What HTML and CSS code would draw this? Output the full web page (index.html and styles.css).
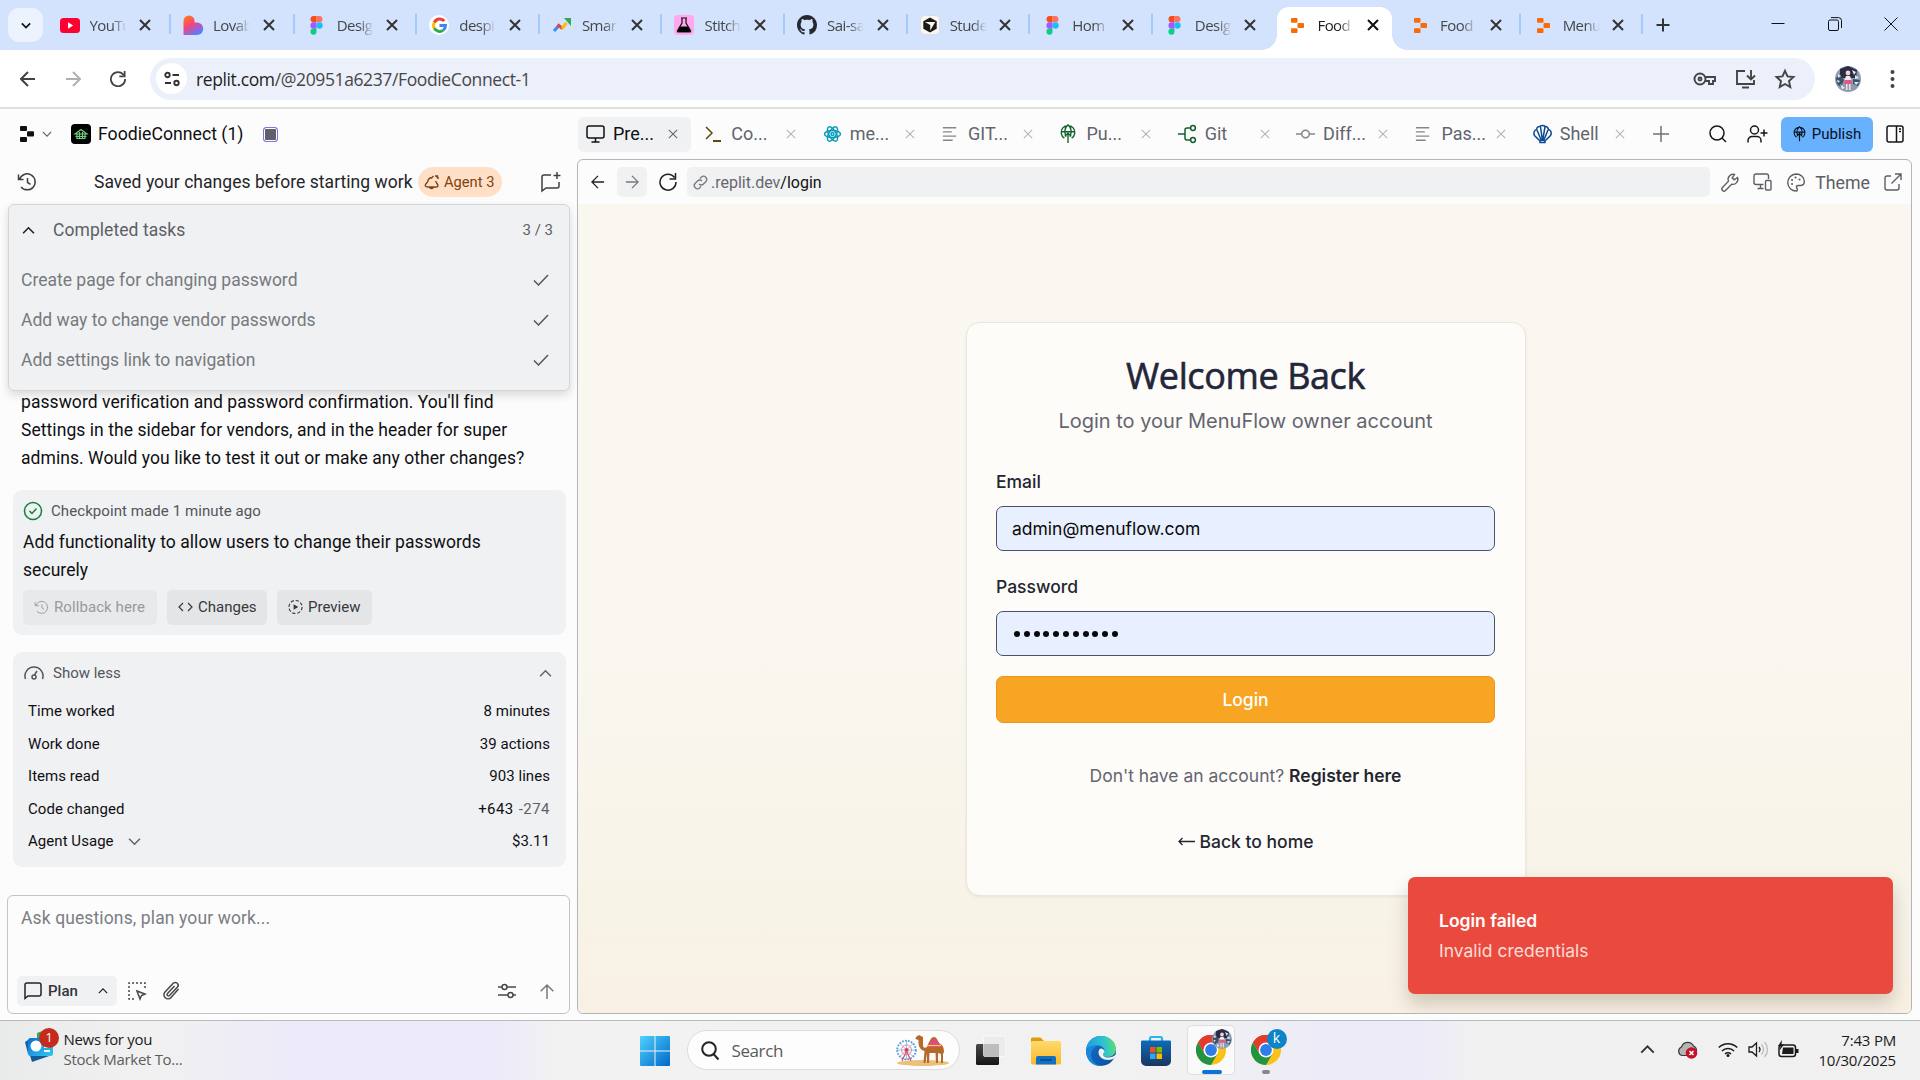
FILE: index.html
```html
<!DOCTYPE html>
<html lang="en">
<head>
<meta charset="utf-8">
<title>FoodieConnect (1)</title>
<link rel="stylesheet" href="styles.css">
</head>
<body>
<svg class="defs" aria-hidden="true">
  <defs>
    <linearGradient id="lov" x1="0" y1="0" x2=".6" y2="1"><stop offset=".1" stop-color="#ff7a18"/><stop offset=".5" stop-color="#f6437f"/><stop offset="1" stop-color="#5b7cff"/></linearGradient>
    <linearGradient id="win" x1="0" y1="0" x2="1" y2="1"><stop offset="0" stop-color="#4fd2ff"/><stop offset="1" stop-color="#0067c8"/></linearGradient>
    <linearGradient id="edgeA" x1="0" y1=".3" x2="1" y2=".2"><stop offset="0" stop-color="#1f9be0"/><stop offset=".6" stop-color="#2fc4cf"/><stop offset="1" stop-color="#5fe06c"/></linearGradient>
    <linearGradient id="edgeB" x1="0" y1="0" x2="1" y2="1"><stop offset="0" stop-color="#1573c9"/><stop offset="1" stop-color="#0a4f9f"/></linearGradient>
    <linearGradient id="store" x1="0" y1="0" x2="0" y2="1"><stop offset="0" stop-color="#0c6cb8"/><stop offset="1" stop-color="#1c3560"/></linearGradient>
    <linearGradient id="fold" x1="0" y1="0" x2="0" y2="1"><stop offset="0" stop-color="#ffd96a"/><stop offset="1" stop-color="#fbb92a"/></linearGradient>
    <linearGradient id="news" x1="0" y1="0" x2="1" y2="1"><stop offset="0" stop-color="#0a6fd6"/><stop offset="1" stop-color="#33c9ee"/></linearGradient>
    <linearGradient id="dark" x1="0" y1="0" x2="0" y2="1"><stop offset="0" stop-color="#4a4a4a"/><stop offset="1" stop-color="#151515"/></linearGradient>
  </defs>
  <symbol id="x" viewBox="0 0 12 12"><path d="M1 1l10 10M11 1L1 11"/></symbol>
  <symbol id="down" viewBox="0 0 12 12"><path d="M1 3.5l5 5 5-5"/></symbol>
  <symbol id="up" viewBox="0 0 12 12"><path d="M1 8.5l5-5 5 5"/></symbol>
  <symbol id="left" viewBox="0 0 16 16"><path d="M15 8H1.5M8 1L1 8l7 7"/></symbol>
  <symbol id="right" viewBox="0 0 16 16"><path d="M1 8h13.5M8 1l7 7-7 7"/></symbol>
  <symbol id="figma" viewBox="0 0 13 20"><path fill="#f24e1e" d="M3.5 0h3v6.600h-3a3.300 3.300 0 010-6.600z"/><path fill="#ff7262" d="M6.500 0h3a3.300 3.300 0 010 6.600h-3z"/><path fill="#a259ff" d="M3.500 6.600h3v6.700h-3a3.300 3.300 0 010-6.700z"/><circle fill="#1abcfe" cx="9.700" cy="10" r="3.300"/><path fill="#0acf83" d="M3.500 13.300h3v3.300a3.200 3.200 0 11-3-3.300z"/></symbol>
  <symbol id="replit" viewBox="0 0 14 16"><rect width="7" height="5" rx="1"/><rect x="7" y="5.300" width="7" height="5.300" rx="1"/><rect y="11" width="7" height="5" rx="1"/></symbol>
  <symbol id="reload" viewBox="0 0 18 18"><path d="M15.500 4.500A8 8 0 1017 9M16.500 0v6h-6"/></symbol>
  <symbol id="lines" viewBox="0 0 18 18"><path d="M1 2h15M1 6.700h10M1 11.300h15M1 16h11"/></symbol>
  <symbol id="globe" viewBox="0 0 18 22"><path d="M5 15.500a7.500 7.500 0 118 0M1.500 8.500h15M6.800 14C4.500 9 5.500 3.500 9 1c3.500 2.500 4.500 8 2.200 13M9 21V10M5.500 13.500L9 10l3.500 3.500"/></symbol>
  <symbol id="history" viewBox="0 0 20 20"><path d="M2.500 7.500A8 8 0 114 15M1.500 2.500v5h5M10.500 6v4.500l3 1.800"/></symbol>
  <symbol id="check" viewBox="0 0 16 12"><path d="M1 6.500L5.500 11 15 1"/></symbol>
  <symbol id="chrome" viewBox="0 0 30 30"><circle cx="15" cy="15" r="15" fill="#fbc116"/><path fill="#e33b2e" d="M15 15L2 7.500A15 15 0 0128 7.500H15z"/><path fill="#e33b2e" d="M2 7.500A15 15 0 0128 7.500L15 8l-6.500 10.800z"/><path fill="#229342" d="M2 7.500A15 15 0 0015 30l6.500-11.300-6.500 3-6.500-3z"/><circle cx="15" cy="15" r="7.500" fill="#fff"/><circle cx="15" cy="15" r="5.900" fill="#2f7de9"/></symbol>
  <symbol id="face" viewBox="0 0 26 26"><circle cx="13" cy="13" r="13" fill="#8e9cb0"/><path fill="#2c2b46" d="M5 3l8-3 9 4-1 8H5z"/><path fill="#3c5068" d="M1 12l4-4 4 6-3 7-4-3zM18 13l7 1-2 6-5-2z"/><path fill="#dfe9f2" d="M2 14l3 1-2 2zM19 16l5 0-3 3zM5 18l5 4-3 1zM17 4l4 2-2 3zM3 8l3 2-3 2zM20 9l4 3-4 1z"/><circle cx="13" cy="7" r="2.400" fill="#f2d3c8"/><path fill="#f3e6ee" d="M11 10h4l1.500 4h-7z"/><path fill="#e2578a" d="M10 14h6l1 4H9z"/><path fill="#f4ddd4" d="M11 18h1.500v6H11zM14 18h1.500v6H14z"/></symbol>
</svg>

<header class="tabstrip">
  <button class="tabsearch"><svg class="i12 s2"><use href="#down"/></svg></button>
  <div class="tab wide"><span class="fav"><svg width="20" height="15" viewBox="0 0 20 15"><rect width="20" height="15" rx="3.500" fill="#f03"/><path fill="#fff" d="M8 4.300l5.200 3.200L8 10.700z"/></svg></span><span class="title">YouTu</span><svg class="i11 s2 c"><use href="#x"/></svg></div>
  <div class="tab wide"><span class="fav"><svg width="20" height="20" viewBox="0 0 20 20"><path fill="url(#lov)" d="M.5 6a5.500 5.500 0 0111 0v1.500h2.500a6 6 0 010 12.500H.5z"/></svg></span><span class="title">Lovab</span><svg class="i11 s2 c"><use href="#x"/></svg></div>
  <div class="tab"><span class="fav"><svg width="13" height="19"><use href="#figma"/></svg></span><span class="title">Desig</span><svg class="i11 s2 c"><use href="#x"/></svg></div>
  <div class="tab"><span class="fav round"><svg width="15" height="15" viewBox="0 0 15 15" fill="none" stroke-width="3"><path stroke="#ea4335" d="M12.300 3A6 6 0 002.300 4.700"/><path stroke="#fbbc05" d="M2.300 4.700a6 6 0 000 5.700"/><path stroke="#34a853" d="M2.300 10.300a6 6 0 009 1.800"/><path stroke="#4285f4" d="M11.300 12.100a6 6 0 002.200-4.600H7.500"/></svg></span><span class="title">despi</span><svg class="i11 s2 c"><use href="#x"/></svg></div>
  <div class="tab"><span class="fav"><svg width="18" height="14" viewBox="0 0 18 14" fill="none" stroke-width="3"><path stroke="#4285f4" d="M1 13l4.500-5"/><path stroke="#ea4335" d="M4.500 6.500l5 4"/><path stroke="#fbbc05" d="M9 10.500l4.500-5.500"/><path fill="#34a853" d="M11 0h7v8z"/></svg></span><span class="title">Smar</span><svg class="i11 s2 c"><use href="#x"/></svg></div>
  <div class="tab"><span class="fav"><svg width="20" height="20" viewBox="0 0 20 20"><rect width="20" height="20" rx="4" fill="#ffa8ef"/><path d="M7 3h6M8 3v5l-4.500 7.500a1 1 0 001 1.500h11a1 1 0 001-1.500L12 8V3" fill="none" stroke="#111" stroke-width="1.200"/><path fill="#000" d="M6.200 11.500h7.600l2.700 4.500-1 1h-11l-1-1z"/></svg></span><span class="title">Stitch</span><svg class="i11 s2 c"><use href="#x"/></svg></div>
  <div class="tab"><span class="fav"><svg width="20" height="20" viewBox="0 0 16 16"><path fill="#24292f" d="M8 0C3.580 0 0 3.580 0 8c0 3.540 2.290 6.530 5.470 7.590.4.070.55-.17.55-.38 0-.19-.01-.82-.01-1.490-2.010.37-2.530-.49-2.690-.94-.09-.23-.48-.94-.82-1.130-.28-.15-.68-.52-.01-.53.63-.01 1.080.58 1.230.82.72 1.210 1.870.87 2.330.66.07-.52.28-.87.51-1.070-1.780-.2-3.640-.89-3.640-3.950 0-.87.31-1.590.82-2.150-.08-.2-.36-1.020.08-2.120 0 0 .67-.21 2.200.82.64-.18 1.320-.27 2-.27s1.360.09 2 .27c1.530-1.040 2.200-.82 2.200-.82.44 1.100.16 1.920.08 2.120.51.56.82 1.270.82 2.150 0 3.070-1.870 3.750-3.650 3.950.29.25.54.73.54 1.480 0 1.070-.01 1.930-.01 2.200 0 .21.15.46.55.38A8.010 8.010 0 0016 8c0-4.420-3.580-8-8-8z"/></svg></span><span class="title">Sai-sa</span><svg class="i11 s2 c"><use href="#x"/></svg></div>
  <div class="tab"><span class="fav"><svg width="20" height="20" viewBox="0 0 20 20"><rect x=".5" y=".5" width="19" height="19" rx="4" fill="#f8f7f3" stroke="#ddd"/><path fill="#1c1a14" d="M10 2.500l6.700 3.800v7.500L10 17.500l-6.700-3.700V6.300z"/><path fill="#f8f7f3" d="M5 7h10.300l-5.100 8.600V9.900z"/></svg></span><span class="title">Stude</span><svg class="i11 s2 c"><use href="#x"/></svg></div>
  <div class="tab"><span class="fav"><svg width="13" height="19"><use href="#figma"/></svg></span><span class="title">Hom</span><svg class="i11 s2 c"><use href="#x"/></svg></div>
  <div class="tab last"><span class="fav"><svg width="13" height="19"><use href="#figma"/></svg></span><span class="title">Desig</span><svg class="i11 s2 c"><use href="#x"/></svg></div>
  <div class="tab active last"><span class="fav or"><svg width="13" height="15"><use href="#replit"/></svg></span><span class="title">Food</span><svg class="i11 s2 c"><use href="#x"/></svg></div>
  <div class="tab"><span class="fav or"><svg width="13" height="15"><use href="#replit"/></svg></span><span class="title">Food</span><svg class="i11 s2 c"><use href="#x"/></svg></div>
  <div class="tab"><span class="fav or"><svg width="13" height="15"><use href="#replit"/></svg></span><span class="title">Menu</span><svg class="i11 s2 c"><use href="#x"/></svg></div>
  <svg class="newtab" width="14" height="14" viewBox="0 0 14 14"><path d="M7 .5v13M.5 7h13"/></svg>
  <div class="winctl">
    <svg width="14" height="14" viewBox="0 0 14 14"><path d="M.5 6.500h13"/></svg>
    <svg width="14" height="14" viewBox="0 0 14 14"><rect x=".5" y="3" width="10" height="10.500" rx="1.500"/><path d="M3 .6h7.500a3 3 0 013 3V11"/></svg>
    <svg width="14" height="14" viewBox="0 0 14 14"><path d="M.5.5l13 13M13.500.5l-13 13"/></svg>
  </div>
</header>

<nav class="toolbar">
  <svg class="i15 s2 nav"><use href="#left"/></svg>
  <svg class="i15 s2 nav dim"><use href="#right"/></svg>
  <svg class="i15 s2 nav"><use href="#reload"/></svg>
  <div class="omni">
    <span class="site"><svg width="16" height="14" viewBox="0 0 16 14"><circle cx="3.500" cy="3" r="2.200"/><path d="M8.500 3h6.500M1 11h6"/><circle cx="12.500" cy="11" r="2.200"/></svg></span>
    <span class="url">replit.com<span>/@20951a6237/FoodieConnect-1</span></span>
    <svg class="ob" width="23" height="16" viewBox="0 0 23 16"><circle cx="7" cy="8" r="5.500"/><circle cx="7" cy="8" r="1.500"/><path d="M12 6h10v4h-2v3h-4v-3h-4"/></svg>
    <svg class="ob" width="21" height="20" viewBox="0 0 21 20"><path d="M10 2H2v13h17v-4M16 1v9M12 6.500l4 4 4-4M7 18.500h7" /></svg>
    <svg class="ob" width="20" height="20" viewBox="0 0 20 20"><path d="M10 1.800l2.500 5.600 6 .6-4.500 4.100 1.300 6-5.300-3.100-5.300 3.100 1.300-6L1.500 8l6-.6z"/></svg>
  </div>
  <svg class="avatar" width="26" height="26"><use href="#face"/></svg>
  <svg class="dots" width="5" height="20" viewBox="0 0 5 20"><circle cx="2.500" cy="3" r="2"/><circle cx="2.500" cy="10" r="2"/><circle cx="2.500" cy="17" r="2"/></svg>
</nav>

<div class="bar">
  <div class="project">
    <svg class="rlogo" width="14" height="16"><use href="#replit"/></svg>
    <svg class="i9 s1"><use href="#down"/></svg>
    <svg class="appicon" width="20" height="20" viewBox="0 0 20 20"><rect width="20" height="20" rx="4"/><path d="M4 10l6-4.500 6 4.500zM4.500 12.500h11M6 10v4.500h8V10M8.500 8v6M11.500 8v6" fill="none" stroke="#6fcf7c" stroke-width="1.200"/></svg>
    <span class="pname">FoodieConnect (1)</span>
    <span class="swatch"></span>
  </div>
  <div class="panes">
    <div class="pt on"><svg width="20" height="18" viewBox="0 0 20 18"><rect x="1" y="1" width="17" height="12" rx="2"/><path d="M9.500 13v4M5.500 17h8"/></svg><span>Pre...</span><svg class="i10 px"><use href="#x"/></svg></div>
    <div class="pt olive"><svg width="20" height="18" viewBox="0 0 20 18"><path d="M2 2l6 6-6 6"/><path stroke-width="2" d="M9 16h8"/></svg><span>Co...</span><svg class="i10 px"><use href="#x"/></svg></div>
    <div class="pt cyan"><svg width="20" height="18" viewBox="0 0 20 18"><circle cx="9.500" cy="9" r="1.500"/><ellipse cx="9.500" cy="9" rx="8" ry="3.600"/><ellipse cx="9.500" cy="9" rx="8" ry="3.600" transform="rotate(60 9.500 9)"/><ellipse cx="9.500" cy="9" rx="8" ry="3.600" transform="rotate(120 9.500 9)"/></svg><span>me...</span><svg class="i10 px"><use href="#x"/></svg></div>
    <div class="pt gray"><svg width="20" height="18"><use href="#lines" width="18" height="16" y="1"/></svg><span>GIT...</span><svg class="i10 px"><use href="#x"/></svg></div>
    <div class="pt green"><svg width="20" height="20"><use href="#globe" width="18" height="20"/></svg><span>Pu...</span><svg class="i10 px"><use href="#x"/></svg></div>
    <div class="pt green"><svg width="20" height="18" viewBox="0 0 20 18"><path d="M0 9h7M12.500 3H9a2 2 0 00-2 2v8a2 2 0 002 2h3.500"/><circle cx="15" cy="3" r="2.400"/><circle cx="15" cy="15" r="2.400"/></svg><span>Git</span><svg class="i10 px"><use href="#x"/></svg></div>
    <div class="pt gray"><svg width="20" height="18" viewBox="0 0 20 18"><circle cx="9.500" cy="9" r="3.800"/><path d="M0 9h5.700M13.300 9H19"/></svg><span>Diff...</span><svg class="i10 px"><use href="#x"/></svg></div>
    <div class="pt gray"><svg width="20" height="18"><use href="#lines" width="18" height="16" y="1"/></svg><span>Pas...</span><svg class="i10 px"><use href="#x"/></svg></div>
    <div class="pt navy"><svg width="20" height="20" viewBox="0 0 20 20"><path d="M7 17L1.500 11.500C0 9 1.500 6 3.500 5.500 4 3 6 2.200 7 2.500 8 1 11 1 12 2.500c1.500-.3 3 1 3.500 3 2.500.5 3.500 3.500 2 6L12 17v1.500H7zM8.500 17L4 6M9.500 17L7.500 3M9.500 17l2.500-14M10.500 17L15 6"/></svg><span>Shell</span><svg class="i10 px"><use href="#x"/></svg></div>
    <svg class="padd" width="16" height="16" viewBox="0 0 16 16"><path d="M8 0v16M0 8h16"/></svg>
  </div>
  <div class="acts">
    <svg width="18" height="18" viewBox="0 0 18 18"><circle cx="8" cy="8" r="7"/><path d="M13 13l4 4"/></svg>
    <svg width="21" height="18" viewBox="0 0 21 18"><circle cx="7.500" cy="5" r="4"/><path d="M1 17.500v-2a4 4 0 014-4h5a4 4 0 014 4v2M17 4.500v7M13.500 8h7"/></svg>
    <button class="publish"><svg width="13" height="16"><use href="#globe" width="13" height="16"/></svg>Publish</button>
    <svg width="18" height="18" viewBox="0 0 18 18"><rect x="1" y="1" width="16" height="16" rx="2"/><path d="M10.500 1v16M13 4h2M13 6.500h2"/></svg>
  </div>
</div>

<main class="work">
  <section class="agent">
    <div class="ahead">
      <svg class="i20 ink"><use href="#history"/></svg>
      <span class="saved">Saved your changes before starting work</span>
      <span class="pill"><svg width="16" height="16" viewBox="0 0 16 16"><path d="M8 3.500C5 3.500 4 6 3.500 8L1.500 10.500c-1 2 1 2.500 3 2.500h7c3 0 3-1.500 1.500-3.500L11.500 7M5.500 13c.5 2 3.500 2 4 0M7 4.500L9.500 2M12 1v2M15 4h-2M14 1.500L12.500 3.500"/></svg>Agent 3</span>
      <svg class="newchat ink" width="20" height="20" viewBox="0 0 20 20"><path d="M10 3H3a2 2 0 00-2 2v14l4-3h11a2 2 0 002-2v-4M16 0v7M12.500 3.500h7"/></svg>
    </div>
    <div class="tasks">
      <div class="thead"><svg class="i12 s15"><use href="#up"/></svg><span class="tt">Completed tasks</span><span class="cnt">3 / 3</span></div>
      <div class="trow"><span>Create page for changing password</span><svg width="16" height="12"><use href="#check"/></svg></div>
      <div class="trow"><span>Add way to change vendor passwords</span><svg width="16" height="12"><use href="#check"/></svg></div>
      <div class="trow"><span>Add settings link to navigation</span><svg width="16" height="12"><use href="#check"/></svg></div>
    </div>
    <p class="msg">password verification and password confirmation. You'll find<br>Settings in the sidebar for vendors, and in the header for super<br>admins. Would you like to test it out or make any other changes?</p>
    <div class="card check">
      <div class="ck"><svg width="20" height="20" viewBox="0 0 20 20"><circle cx="10" cy="10" r="8.500"/><path d="M6.500 10l2.500 2.500 4.500-5"/></svg>Checkpoint made 1 minute ago</div>
      <p class="ctext">Add functionality to allow users to change their passwords<br>securely</p>
      <div class="btns">
        <button class="off"><svg width="15" height="15"><use href="#history" width="15" height="15"/></svg>Rollback here</button>
        <button><svg width="15" height="14" viewBox="0 0 15 14"><path d="M5 3L1 7l4 4M10 3l4 4-4 4"/></svg>Changes</button>
        <button><svg width="15" height="16" viewBox="0 0 16 16"><circle cx="8" cy="8" r="7" stroke-dasharray="3.500 2"/><path fill="currentColor" stroke="none" d="M6 5v6l5-3z"/></svg>Preview</button>
      </div>
    </div>
    <div class="card stats">
      <div class="sh"><svg width="20" height="14" viewBox="0 0 20 14"><path d="M1.500 13a9 9 0 1117 0M10.500 9L13 5"/><circle cx="10" cy="11" r="2"/></svg><span>Show less</span><svg class="i12 s1"><use href="#up"/></svg></div>
      <div class="sr"><span>Time worked</span><span>8 minutes</span></div>
      <div class="sr"><span>Work done</span><span>39 actions</span></div>
      <div class="sr"><span>Items read</span><span>903 lines</span></div>
      <div class="sr"><span>Code changed</span><span class="diff">+643 <i>-274</i></span></div>
      <div class="sr"><span>Agent Usage<svg class="i12 s1"><use href="#down"/></svg></span><span>$3.11</span></div>
    </div>
    <div class="composer">
      <span class="ph">Ask questions, plan your work...</span>
      <div class="tools">
        <span class="plan"><svg width="18" height="18" viewBox="0 0 18 18"><path d="M1 16.500V3a2 2 0 012-2h12a2 2 0 012 2v9a2 2 0 01-2 2H4z"/></svg><b>Plan</b><svg class="i9 s15"><use href="#up"/></svg></span>
        <svg width="18" height="18" viewBox="0 0 18 18"><path stroke-dasharray="2 2" d="M6 17H1V1h16v6"/><path d="M9 9l8 3-3.500 1.500L12 17z"/></svg>
        <svg class="clip" width="17" height="18" viewBox="0 0 17 18"><path d="M15.500 7L8 15.500a4 4 0 01-6-5.500l8-8.500a2.800 2.800 0 014.500 3.500l-8 8.500a1.300 1.300 0 01-2-2l7-7.500"/></svg>
        <svg class="slid" width="19" height="16" viewBox="0 0 19 16"><path d="M0 4h4M9 4h9M0 12h10M15 12h3"/><circle cx="6.500" cy="4" r="2.500"/><circle cx="12.500" cy="12" r="2.500"/></svg>
        <svg class="send" width="14" height="15" viewBox="0 0 14 15"><path d="M7 15V1M.7 7.300L7 1l6.300 6.300"/></svg>
      </div>
    </div>
  </section>

  <section class="preview">
    <div class="pbar">
      <svg class="i13 s15"><use href="#left"/></svg>
      <span class="fwd"><svg class="i13 s15"><use href="#right"/></svg></span>
      <svg class="prel s15" width="18" height="18"><use href="#reload"/></svg>
      <div class="addr"><svg width="15" height="15" viewBox="0 0 15 15"><path d="M6 9a3 3 0 004.500 0l2.500-2.500a3.200 3.200 0 00-4.500-4.500L7 3.500M9 6a3 3 0 00-4.500 0L2 8.500A3.200 3.200 0 006.500 13L8 11.500"/></svg><span>.replit.dev<b>/login</b></span></div>
      <svg width="18" height="19" viewBox="0 0 18 19"><path d="M16.500 4.500l-3.300 2.300-2-2L13.500 1.500A5 5 0 007.500 8.200L1.500 14.500a2 2 0 003 3l6.200-6.300a5 5 0 005.800-6.700z"/></svg>
      <svg width="19" height="18" viewBox="0 0 19 18"><path d="M15.500 6V3a2 2 0 00-2-2H3a2 2 0 00-2 2v6.500a2 2 0 002 2h7.500M7.500 11.500v4M4.500 15.500h6"/><rect x="12.500" y="7.500" width="5.500" height="9.500" rx="1"/></svg>
      <svg width="18" height="19" viewBox="0 0 18 19"><path d="M9.500 18A8.500 8.500 0 119 1c5 0 8.300 3.500 8.300 7.500 0 2.500-1.800 4-4 4h-2c-2 0-2.300 1.500-1.500 2.500s.8 3-.3 3z"/><path d="M5 7h.1M8.500 4.500h.1M12.500 6.500h.1M5 11h.1" stroke-width="2" stroke-linecap="round"/></svg>
      <span class="theme">Theme</span>
      <svg width="18" height="18" viewBox="0 0 18 18"><path d="M7 3H3a2 2 0 00-2 2v10a2 2 0 002 2h10a2 2 0 002-2v-4M11 1h6v6M17 1L7.500 10.500"/></svg>
    </div>
    <div class="site-page">
      <form class="login">
        <h1>Welcome Back</h1>
        <p class="sub">Login to your MenuFlow owner account</p>
        <label>Email</label>
        <div class="field">admin@menuflow.com</div>
        <label>Password</label>
        <div class="field pw"><i></i><i></i><i></i><i></i><i></i><i></i><i></i><i></i><i></i><i></i><i></i></div>
        <div class="go">Login</div>
        <p class="reg">Don't have an account? <b>Register here</b></p>
        <p class="home"><svg width="17" height="9" viewBox="0 0 17 9"><path d="M17 4.500H1M4.500 1L1 4.500 4.500 8"/></svg>Back to home</p>
      </form>
      <div class="toast"><b>Login failed</b><span>Invalid credentials</span></div>
    </div>
  </section>
</main>

<footer class="taskbar">
  <div class="widget">
    <div class="wicon"><svg width="29" height="32" viewBox="0 0 29 32"><path fill="#3ea45a" d="M12 3l8-3v10h-8z"/><path fill="#145a94" d="M1 13l26 12-20 7z"/><rect x="3" y="8" width="25" height="18" rx="2.500" fill="url(#news)"/><path fill="#0f5fb8" d="M0 12l3-2v14z"/><circle cx="11" cy="16" r="5.500" fill="#fff"/><path stroke="#e8fbff" stroke-width="2" d="M19 17h6M19 21h6"/></svg><em>1</em></div>
    <div class="wtext"><span>News for you</span><span class="w2">Stock Market To...</span></div>
  </div>
  <div class="center">
    <svg class="start" width="30" height="30" viewBox="0 0 30 30"><path fill="url(#win)" d="M0 1a1 1 0 011-1h13.500v14.500H0zM15.500 0H29a1 1 0 011 1v13.500H15.500zM0 15.500h14.500V30H1a1 1 0 01-1-1zM15.500 15.500H30V29a1 1 0 01-1 1H15.500z"/></svg>
    <div class="search"><svg class="mag" width="18" height="19" viewBox="0 0 18 19"><circle cx="8" cy="8" r="6.800"/><path d="M12.500 13l5 5.500"/></svg><span>Search</span>
      <svg width="54" height="32" viewBox="0 0 54 32"><ellipse cx="27" cy="29" rx="26" ry="3" fill="#ecc078"/><g fill="none" stroke="#4b9ae0" stroke-width="1.800" stroke-dasharray="1.700 1.300"><circle cx="10.500" cy="16" r="9.300"/></g><g stroke="#6aa9dd" stroke-width=".7"><path d="M10.500 6v20M.5 16h20M3.500 9l14 14M17.500 9l-14 14"/></g><circle cx="10.500" cy="16" r="5" fill="none" stroke="#f08a9a" stroke-width="1"/><circle cx="10.500" cy="16" r="2" fill="#e8384f"/><path d="M10.500 17l-4.500 10M10.500 17l4.500 10" stroke="#e0506a" stroke-width="1.200"/><path fill="#b56a2c" d="M20 3l3-2 4 2v7c0 4 1.500 4.500 4 3 2-5 4-10 7-10s4 5 6 7c3 1 4 4 4 8l-1 2v9h-2V20l-3-1 0 10h-2l-.5-10-6 0-.5 10h-2l0-10-1.500 10h-2l1-12c-4-1-6-4-6-9V6l-3-1z"/><path fill="#e14a7a" d="M33 9l5-5 6 6 1 3H32z"/><path stroke="#ffd24d" stroke-width="1.200" d="M32 11.500h13"/></svg></div>
    <svg class="tv" width="30" height="30" viewBox="0 0 30 30"><rect y="8" width="23" height="21" rx="1.500" fill="url(#dark)"/><rect x="7.500" y="0" width="22" height="20.500" rx="1.500" fill="#e9e9e9" fill-opacity=".82" stroke="#fff" stroke-opacity=".6"/><path fill="#bdbdbd" d="M8 8h15v12.500H8z"/></svg>
    <svg class="fo" width="30" height="28" viewBox="0 0 30 28"><path fill="#dd9a0a" d="M0 2a1.500 1.500 0 011.500-1.500h8L13 4v6H0z"/><rect y="4" width="30" height="23.500" rx="1.500" fill="url(#fold)"/><path fill="#1070c4" d="M5 27.500V21a2 2 0 012-2h16a2 2 0 012 2v6.500z"/><path stroke="#0a4c8c" stroke-width="1.800" d="M9 23h12"/></svg>
    <svg class="ed" width="30" height="30" viewBox="0 0 30 30"><circle cx="15" cy="15" r="15" fill="url(#edgeB)"/><path fill="url(#edgeA)" d="M0 14C1 5 7 0 15 0c9 0 15 6 15 13 0 5-4 8-8 8-3 0-5-1-5-2.500s1.500-1.500 1.500-4-3-5-7-5C7 9.500 1.500 11 0 14z"/><path fill="#1a86dc" d="M0 14c2-4 7-5 11-4-4 2-6 5-6 9s3 9 9 11C5 30 0 23 0 14z"/><path fill="#f1f1f1" d="M30 21c-2 2-5 3-8 3-5 0-9.500-3-9.500-7.500 0-2 1-3.500 2-4 2.500 0 4 1.500 4 3 0 1.500-1.500 1.500-1.500 3S19 21.500 22 21.500c3 0 6-1 8-3z"/></svg>
    <svg class="st" width="30" height="30" viewBox="0 0 30 30"><path fill="none" stroke="#28b3f0" stroke-width="2.200" d="M9 6V2.500A1.500 1.500 0 0110.500 1h9A1.500 1.500 0 0121 2.500V6"/><path fill="url(#store)" d="M0 5.500a1 1 0 011-1h28a1 1 0 011 1V25a5 5 0 01-5 5H5a5 5 0 01-5-5z"/><path fill="#f25022" d="M9 11h5.500v5.500H9z"/><path fill="#7fba00" d="M15.500 11H21v5.500h-5.500z"/><path fill="#2aa8f0" d="M9 17.500h5.500V23H9z"/><path fill="#ffb900" d="M15.500 17.500H21V23h-5.500z"/></svg>
    <div class="app cur"><svg width="30" height="30"><use href="#chrome"/></svg><svg class="badge" width="20" height="20"><use href="#face"/></svg></div>
    <div class="app"><svg width="30" height="30"><use href="#chrome"/></svg><span class="badge k">k</span></div>
  </div>
  <div class="tray">
    <svg class="i14 s2"><use href="#up"/></svg>
    <svg class="cloud" width="21" height="18" viewBox="0 0 21 18"><path fill="#b4b4b4" stroke="#3a3a3a" stroke-width="1.200" d="M5 14.500A4.500 4.500 0 014.500 6 6.500 6.500 0 0116.500 5a5 5 0 013 4.500c0 3-2 5-4.500 5z"/><circle cx="14.500" cy="12" r="5.800" fill="#c4122a"/><path stroke="#fff" stroke-width="1.600" d="M12.500 10l4 4M16.500 10l-4 4"/></svg>
    <svg class="wifi" width="20" height="15" viewBox="0 0 20 15"><path d="M.8 5.500a13 13 0 0118.400 0M4 9a8.500 8.500 0 0112 0M7 12a4.300 4.300 0 016 0" fill="none" stroke="#1b1b1b" stroke-width="1.600"/><circle cx="10" cy="13.500" r="1.500"/></svg>
    <svg class="vol" width="21" height="17" viewBox="0 0 21 17"><path d="M1 6h3l4.500-4v13L4 11H1zM11 6a4 4 0 010 5"/><path stroke="#bbb" d="M13.500 3.500a7 7 0 010 10M16.500 1a11 11 0 010 15"/></svg>
    <svg class="bat" width="21" height="17" viewBox="0 0 21 17"><rect x="1" y="4" width="16.500" height="11.500" rx="2.500" fill="none" stroke="#1b1b1b" stroke-width="1.500"/><path d="M4 13l1-6.500h10.500V13zM18 8h2.500v4H18zM4-1L0 5h2.500L1.500 9.500 6 3.500H3.500z"/></svg>
    <div class="clock"><span>7:43 PM</span><span>10/30/2025</span></div>
  </div>
</footer>
</body>
</html>
```
FILE: styles.css
```css
* { box-sizing: border-box; }
body {
  margin: 0;
  width: 1920px;
  height: 1080px;
  overflow: hidden;
  display: flex;
  flex-direction: column;
  background: #fcfcfc;
  font-family: Roboto, "Liberation Sans", sans-serif;
  color: #0f0f12;
}
svg { flex: none; fill: none; display: block; overflow: visible; }
button { font: inherit; border: 0; padding: 0; margin: 0; color: inherit; }
p, h1 { margin: 0; }
span, p, label, h1, b { white-space: nowrap; }
.defs { position: absolute; width: 0; height: 0; }
.i9 { width: 10px; height: 10px; }
.i10 { width: 10px; height: 10px; }
.i11 { width: 12px; height: 12px; }
.i12 { width: 13px; height: 13px; }
.i13 { width: 14px; height: 14px; }
.i14 { width: 15px; height: 15px; }
.i15 { width: 16px; height: 16px; }
.i20 { width: 20px; height: 20px; }
.s1 { stroke: #5f6368; stroke-width: 1.4; }
.s15 { stroke: #222; stroke-width: 1.5; }
.s2 { stroke: #333; stroke-width: 2; }

/* browser tab strip */
.tabstrip {
  height: 50px;
  flex: none;
  display: flex;
  align-items: flex-start;
  padding-left: 8px;
  background: #d3e2fd;
  font: 15px "Open Sans", "Noto Sans", sans-serif;
  color: #444746;
}
.tabsearch {
  width: 35px;
  height: 34px;
  margin: 8px 6.500px 0 0;
  border-radius: 11px;
  background: #ecf2fe;
  display: grid;
  place-items: center;
}
.tabsearch svg { stroke: #111; width: 10px; }
.tab {
  width: 122.600px;
  height: 43px;
  margin-top: 7px;
  padding: 0 0 7px 10px;
  flex: none;
  display: flex;
  align-items: center;
  position: relative;
}
.tab.wide { width: 123.600px; }
.tab::after {
  content: "";
  position: absolute;
  right: 2px;
  top: 7px;
  width: 2px;
  height: 20px;
  background: #a8c7fa;
}
.tab.last::after { display: none; }
.fav { width: 20px; height: 20px; margin-right: 10px; display: grid; place-items: center; flex: none; }
.fav.round { background: #fff; border-radius: 50%; }
.fav.or svg { fill: #fa6a06; margin-left: 1px; }
.title {
  width: 40px;
  margin-right: 9.500px;
  letter-spacing: -.55px;
  -webkit-mask-image: linear-gradient(90deg, #000 55%, transparent 92%);
  mask-image: linear-gradient(90deg, #000 55%, transparent 92%);
}
.tab.active { color: #1f1f1f; z-index: 1; }
.tab.active > * { z-index: 1; }
.tab.active .c { stroke: #111; }
.tab.active::after {
  display: block;
  z-index: 0;
  inset: 0 8px 0 0;
  width: auto;
  height: auto;
  background: #fff;
  border-radius: 12px 12px 0 0;
}
.tab.active::before {
  content: "";
  position: absolute;
  left: -15px;
  right: -7px;
  bottom: 0;
  height: 15px;
  background:
    radial-gradient(circle at 0 0, transparent 14.5px, #fff 15px) left / 15px 15px no-repeat,
    radial-gradient(circle at 100% 0, transparent 14.5px, #fff 15px) right / 15px 15px no-repeat;
}
.newtab { margin: 18px 0 0 11px; stroke: #333; stroke-width: 2; }
.winctl { margin: 17px 22px 0 auto; display: flex; gap: 42.500px; }
.winctl svg { stroke: #111; }

/* browser toolbar */
.toolbar {
  height: 59px;
  flex: none;
  display: flex;
  align-items: center;
  padding: 0 0 2px 20px;
  background: linear-gradient(#fff 57px, #dedede 57px);
}
.nav { margin-right: 29px; stroke: #444; }
.nav.dim { stroke: #b0b0b0; }
.omni {
  width: 1665px;
  height: 42px;
  margin-left: -5px;
  border-radius: 21px;
  background: #ecf0fa;
  display: flex;
  align-items: center;
  padding: 0 20px 0 6px;
}
.site { width: 31px; height: 31px; border-radius: 50%; background: #fff; display: grid; place-items: center; margin-right: 9px; }
.site svg { stroke: #333; stroke-width: 1.900; }
.url { font: 17.500px "Open Sans", "Noto Sans", sans-serif; letter-spacing: -.38px; color: #1f1f1f; margin-right: auto; }
.url span { color: #474747; }
.ob { stroke: #444; stroke-width: 1.900; margin-left: 19px; }
.avatar { margin-left: 20px; }
.dots { margin-left: 29px; fill: #444; }

/* workspace top bar */
.bar { height: 50px; flex: none; display: flex; align-items: center; padding-right: 15px; }
.project { width: 578px; display: flex; align-items: center; padding-left: 20px; }
.rlogo { fill: #0f0f12; margin-right: 8px; }
.appicon { margin: 0 7px 0 19px; fill: #000; }
.pname { font-size: 17.700px; }
.swatch { width: 15px; height: 15px; margin-left: 19px; border: 1px solid #8a6cf0; box-shadow: inset 0 0 0 1px #fff; background: #5f6068; border-radius: 3px; }
.panes { display: flex; align-items: center; }
.pt {
  width: 118.350px;
  height: 35px;
  padding-left: 8px;
  display: flex;
  align-items: center;
  font-size: 18px;
  stroke-width: 1.500;
}
.pt > svg:first-child { stroke: currentColor; margin-right: 7px; width: 20px; }
.pt span { width: 55px; color: #62646c; line-height: 33px; padding-bottom: 2px; }
.pt.on { width: 113px; margin-right: 5.350px; background: #f0f1f3; border-radius: 6px; color: #111; }
.pt.on span { color: #111; }
.olive { color: #5d4c07; }
.cyan { color: #0c9cba; }
.green { color: #11602b; }
.navy { color: #0c4a93; }
.gray { color: #84868c; }
.pt .px { stroke: #b5b5b9; stroke-width: 1.300; }
.pt.on .px { stroke: #66686e; }
.padd { stroke: #707278; stroke-width: 1.500; margin-left: 10px; }
.acts { margin-left: auto; display: flex; align-items: center; }
.acts > svg { stroke: #15161a; stroke-width: 1.500; margin-right: 13px; }
.acts > svg:nth-child(1) { margin-right: 20px; }
.acts > svg:last-child { margin: 0 1px 0 13px; }
.publish { width: 92px; height: 35px; border-radius: 6px; background: #68b1ff; display: flex; align-items: center; justify-content: center; gap: 6px; font-size: 15px; color: #06101f; }
.publish svg { stroke: #06101f; stroke-width: 1.600; }

/* workspace */
.work { height: 861px; flex: none; display: flex; padding-bottom: 6px; }
.agent { width: 577px; flex: none; display: flex; flex-direction: column; }
.ahead { height: 45px; display: flex; align-items: center; padding-left: 17px; }
.ink { stroke: #3d3f45; stroke-width: 1.500; }
.saved { font-size: 17.500px; letter-spacing: .04px; margin-left: 57px; width: 324px; color: #24252a; }
.pill { width: 84px; height: 30px; border-radius: 15px; background: #ffe0c7; color: #81430f; font-size: 14.700px; display: flex; align-items: center; gap: 4px; padding-left: 6px; }
.pill svg { stroke: #81430f; stroke-width: 1.400; }
.newchat { margin-left: 39px; }
.tasks {
  height: 187px;
  margin: 0 7px 0 8px;
  border: 1px solid #d3d5d9;
  border-radius: 6px;
  background: #f0f1f3;
  box-shadow: 0 4px 10px rgba(0, 0, 0, .14);
  padding: 0 16px 0 12px;
  color: #77797e;
  font-size: 17.500px;
  z-index: 1;
}
.thead { height: 50px; display: flex; align-items: center; margin-bottom: 5px; padding-left: 1px; }
.thead svg { width: 13px; }
.tt { margin-left: 18px; color: #5d5f65; letter-spacing: .06px; }
.cnt { margin-left: auto; font-size: 15px; color: #5d5f65; }
.trow { height: 40px; display: flex; align-items: center; justify-content: space-between; padding-right: 4px; }
.trow svg { stroke: #55575d; stroke-width: 1.500; }
.msg { font-size: 17.500px; letter-spacing: .06px; line-height: 28px; margin: -3px 0 0 21px; }
.card { margin: 0 11px 0 13px; background: #f0f1f3; border-radius: 9px; }
.check { height: 145px; margin-top: 18px; padding: 10px 10px 0; }
.ck { height: 22px; display: flex; align-items: center; gap: 8px; font-size: 15px; letter-spacing: .08px; color: #53555b; }
.ck svg { stroke: #15803d; stroke-width: 1.500; }
.ctext { font-size: 17.500px; letter-spacing: .06px; line-height: 28px; margin-top: 6px; }
.btns { display: flex; gap: 10px; margin-top: 6px; }
.btns button { height: 35px; width: 95px; border-radius: 5px; background: #e4e5e7; font-size: 15px; color: #36383d; display: flex; align-items: center; gap: 5px; padding: 0 0 1px 11px; white-space: nowrap; }
.btns button:nth-child(2) { width: 100px; }
.btns .off { width: 134px; background: #e8e9eb; color: #97999e; letter-spacing: .08px; }
.btns svg { stroke: currentColor; stroke-width: 1.200; }
.stats { height: 215px; margin-top: 17px; padding: 5px 16px 0 15px; font-size: 15px; }
.sh { height: 32px; display: flex; align-items: center; color: #53555b; margin: 0 -2px 6px -4px; }
.sh span { margin: 0 auto 0 9px; }
.sh > svg:first-child { stroke: #53555b; stroke-width: 1.500; }
.sr { height: 32.500px; display: flex; align-items: center; justify-content: space-between; }
.sr span { display: flex; align-items: center; gap: 5px; letter-spacing: .05px; }
.sr .diff { letter-spacing: .45px; }
.sr i { font-style: normal; color: #5f6167; }
.sr svg { margin-left: 9px; }
.composer { height: 119px; margin: 28px 7px 0; border: 1px solid #c2c3c7; border-radius: 6px; padding: 12px 12px 7px 9px; display: flex; flex-direction: column; justify-content: space-between; }
.ph { font-size: 17.500px; letter-spacing: .12px; color: #7b7d83; margin-left: 4px; }
.tools { display: flex; align-items: center; height: 30px; }
.tools > svg { stroke: #45474d; stroke-width: 1.500; margin-left: 11px; }
.plan { width: 100px; height: 30px; border-radius: 5px; background: #f0f1f3; display: flex; align-items: center; padding-left: 7px; }
.plan svg:first-child { stroke: #222; stroke-width: 1.500; margin-right: 6px; }
.plan b { font: 500 15px Roboto, sans-serif; width: 50px; color: #33353b; }
.tools .clip { margin-left: 17px; }
.tools .slid { margin-left: auto; }
.tools .send { margin: 0 3px 0 23px; stroke: #77797e; }

/* preview pane */
.preview { width: 1335px; height: 855px; border: 1px solid #b4b5b9; border-radius: 6px; overflow: hidden; display: flex; flex-direction: column; }
.pbar { height: 44px; flex: none; display: flex; align-items: center; padding: 0 9px 0 13px; }
.fwd { width: 30px; height: 30px; border-radius: 5px; background: #f0f1f3; display: grid; place-items: center; margin: 0 12px 0 12px; }
.fwd svg { stroke: #77797e; }
.addr { flex: 1; height: 30px; margin: 0 11px 0 10px; border-radius: 5px; background: #f0f1f3; display: flex; align-items: center; gap: 3px; padding-left: 6px; font-size: 16px; color: #66686e; }
.addr b { font-weight: 400; color: #111; }
.addr svg { stroke: #77797e; stroke-width: 1.300; }
.pbar > svg:nth-child(n+5) { stroke: #5d5f65; stroke-width: 1.400; margin-right: 14.500px; }
.pbar > svg:last-child { margin: 0 0 0 14px; }
.theme { font-size: 17.800px; color: #5d5f65; margin-left: -4px; }
.site-page {
  flex: 1;
  position: relative;
  padding: 118px 0 0 388px;
  background: linear-gradient(#faf7f1 0%, #faf7f0 55%, #f7f3e7 86%, #f9f1e5 96%, #f9f0e4 100%);
  font-family: Inter, "Liberation Sans", sans-serif;
  color: #23262f;
}
.login {
  width: 560px;
  height: 574px;
  border: 1px solid #ebe7de;
  border-radius: 14px;
  background: #fdfcf9;
  box-shadow: 0 1px 3px rgba(80, 60, 20, .08);
  padding: 30px 30px 0 29px;
  display: flex;
  flex-direction: column;
}
.login h1 { font: 500 36px/46px "Open Sans", "Noto Sans", sans-serif; letter-spacing: -.4px; -webkit-text-stroke: .6px #23263a; text-align: center; color: #23263a; }
.sub { font-size: 20px; line-height: 28px; margin-top: 8px; text-align: center; color: #64656f; }
.login label { font-size: 17.500px; font-weight: 500; line-height: 24px; margin-top: 35px; }
.field { height: 45px; margin-top: 12px; border: 1px solid #4c5170; border-radius: 7px; background: #e8effe; display: flex; align-items: center; padding-left: 15px; font-size: 17.500px; color: #0a0a0a; }
.field + label { margin-top: 24px; }
.pw { gap: 3.800px; padding-left: 17px; }
.pw i { width: 6px; height: 6px; border-radius: 50%; background: #0a0a0a; }
.go { height: 47px; margin-top: 20px; border: 1px solid #e6981c; border-radius: 7px; background: #f7a522; color: #fff; font-size: 17.500px; font-weight: 500; display: grid; place-items: center; }
.reg { font-size: 17.500px; line-height: 25px; margin-top: 40px; text-align: center; color: #64656f; }
.reg b { font-weight: 600; color: #23262f; }
.home { font-size: 17.500px; font-weight: 500; line-height: 25px; margin-top: 41px; display: flex; align-items: center; justify-content: center; gap: 5px; }
.home svg { stroke: #23262f; stroke-width: 1.300; }
.toast {
  position: absolute;
  right: 18px;
  bottom: 19px;
  width: 485px;
  height: 117px;
  border-radius: 7px;
  background: #ea4a3e;
  box-shadow: 0 10px 18px rgba(90, 80, 50, .25);
  padding: 0 31px;
  display: flex;
  flex-direction: column;
  justify-content: center;
  gap: 5px;
  color: #fff;
  font-size: 17.500px;
  line-height: 25px;
}
.toast b { font-weight: 600; }
.toast span { color: #fbdcd8; }

/* desktop taskbar */
.taskbar {
  height: 60px;
  flex: none;
  border-top: 1px solid #b9babc;
  background: linear-gradient(90deg, #e9ebea 0, #f1f1f1 150px, #edebf9 290px, #edebf9 500px, #f2f2f2 560px, #f1f1f1 1180px, #edebf8 1330px, #edebf8 1420px, #f1f1f1 1480px, #f0f0f0);
  display: flex;
  font: 15px "Open Sans", "Noto Sans", sans-serif;
  color: #1b1b1b;
}
.widget { width: 639.500px; display: flex; padding-left: 25px; }
.wicon { position: relative; width: 38.500px; padding-top: 9px; }
.wicon em { position: absolute; left: 14px; top: 7px; width: 20px; height: 20px; border-radius: 50%; background: #c42b1c; color: #fff; font: 12.500px/20px "Open Sans", sans-serif; text-align: center; }
.wtext { display: flex; flex-direction: column; padding-top: 8px; line-height: 20px; letter-spacing: -.3px; }
.w2 { color: #5c5c5c; }
.center { display: flex; align-items: flex-start; }
.center > svg { margin-top: 15px; }
.search { width: 273px; height: 40px; margin: 9px 0 0 17px; border: 1px solid #dcdcdc; border-radius: 20px; background: #fdfdfd; display: flex; align-items: center; padding: 0 9px 0 13px; font-size: 17px; color: #5a5a5a; letter-spacing: -.4px; }
.search span { margin: 0 auto 0 13px; }
.mag { stroke: #222; stroke-width: 2; }
.center .tv { margin-left: 16px; }
.center .fo { margin: 16px 0 0 25px; }
.center .ed { margin-left: 25px; }
.center .st { margin-left: 25px; }
.app { width: 48px; height: 50px; margin: 4px 0 0 16px; padding: 10px 0 0 9px; position: relative; border-radius: 5px; }
.cur { background: #fafafa; border: 1px solid #dedede; padding: 9px 0 0 8px; }
.cur + .app { margin-left: 7px; }
.app::after { content: ""; position: absolute; left: 20px; bottom: 1px; width: 8px; height: 4px; border-radius: 2px; background: #888; }
.cur::after { left: 14px; bottom: 0; width: 20px; background: #0a74d6; }
.badge { position: absolute; left: 25px; top: 4px; }
.cur .badge { left: 24px; top: 3px; }
.badge.k { width: 20px; height: 20px; border-radius: 50%; background: #0c84c8; color: #fff; font: 14px/18px "Open Sans", sans-serif; text-align: center; }
.tray { margin-left: auto; padding: 0 24px 2px 0; display: flex; align-items: center; }
.tray .cloud { margin: 0 20px 0 22px; }
.tray .vol { margin: 0 9px 0 10px; }
.tray svg { fill: #1b1b1b; }
.tray .i14 { fill: none; stroke-width: 1.500; }
.tray .vol { fill: none; stroke: #1b1b1b; stroke-width: 1.300; }
.clock { width: 97px; display: flex; flex-direction: column; align-items: flex-end; line-height: 20px; letter-spacing: -.2px; }
```
